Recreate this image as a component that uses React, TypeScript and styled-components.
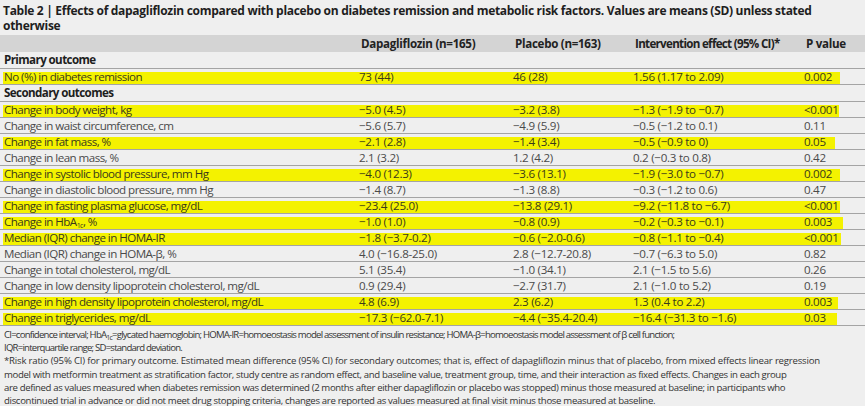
import React from "react";
import styled, { createGlobalStyle } from "styled-components";

const GlobalStyle = createGlobalStyle`
  html, body {
    margin: 0;
    padding: 0;
    background: #efefef;
  }
  body {
    font-family: "Open Sans", "DejaVu Sans", sans-serif;
    color: #3f3f3f;
  }
  sub {
    font-size: 7px;
    line-height: 0;
    vertical-align: baseline;
    position: relative;
    top: 2px;
  }
`;

type DataRow = {
  label: React.ReactNode;
  dapa: string;
  placebo: string;
  effect: string;
  p: string;
  mark?: number;
};

type Section = { title: string; rows: DataRow[] };

const sections: Section[] = [
  {
    title: "Primary outcome",
    rows: [
      {
        label: "No (%) in diabetes remission",
        dapa: "73 (44)",
        placebo: "46 (28)",
        effect: "1.56 (1.17 to 2.09)",
        p: "0.002",
        mark: 840,
      },
    ],
  },
  {
    title: "Secondary outcomes",
    rows: [
      { label: "Change in body weight, kg", dapa: "−5.0 (4.5)", placebo: "−3.2 (3.8)", effect: "−1.3 (−1.9 to −0.7)", p: "<0.001", mark: 839 },
      { label: "Change in waist circumference, cm", dapa: "−5.6 (5.7)", placebo: "−4.9 (5.9)", effect: "−0.5 (−1.2 to 0.1)", p: "0.11" },
      { label: "Change in fat mass, %", dapa: "−2.1 (2.8)", placebo: "−1.4 (3.4)", effect: "−0.5 (−0.9 to 0)", p: "0.05", mark: 835 },
      { label: "Change in lean mass, %", dapa: "2.1 (3.2)", placebo: "1.2 (4.2)", effect: "0.2 (−0.3 to 0.8)", p: "0.42" },
      { label: "Change in systolic blood pressure, mm Hg", dapa: "−4.0 (12.3)", placebo: "−3.6 (13.1)", effect: "−1.9 (−3.0 to −0.7)", p: "0.002", mark: 840 },
      { label: "Change in diastolic blood pressure, mm Hg", dapa: "−1.4 (8.7)", placebo: "−1.3 (8.8)", effect: "−0.3 (−1.2 to 0.6)", p: "0.47" },
      { label: "Change in fasting plasma glucose, mg/dL", dapa: "−23.4 (25.0)", placebo: "−13.8 (29.1)", effect: "−9.2 (−11.8 to −6.7)", p: "<0.001", mark: 840 },
      {
        label: (
          <>
            Change in HbA<sub>1c</sub>, %
          </>
        ),
        dapa: "−1.0 (1.0)",
        placebo: "−0.8 (0.9)",
        effect: "−0.2 (−0.3 to −0.1)",
        p: "0.003",
        mark: 843,
      },
      { label: "Median (IQR) change in HOMA-IR", dapa: "−1.8 (−3.7-0.2)", placebo: "−0.6 (−2.0-0.6)", effect: "−0.8 (−1.1 to −0.4)", p: "<0.001", mark: 841 },
      { label: "Median (IQR) change in HOMA-β, %", dapa: "4.0 (−16.8-25.0)", placebo: "2.8 (−12.7-20.8)", effect: "−0.7 (−6.3 to 5.0)", p: "0.82" },
      { label: "Change in total cholesterol, mg/dL", dapa: "5.1 (35.4)", placebo: "−1.0 (34.1)", effect: "2.1 (−1.5 to 5.6)", p: "0.26" },
      { label: "Change in low density lipoprotein cholesterol, mg/dL", dapa: "0.9 (29.4)", placebo: "−2.7 (31.7)", effect: "2.1 (−1.0 to 5.2)", p: "0.19" },
      { label: "Change in high density lipoprotein cholesterol, mg/dL", dapa: "4.8 (6.9)", placebo: "2.3 (6.2)", effect: "1.3 (0.4 to 2.2)", p: "0.003", mark: 838 },
      { label: "Change in triglycerides, mg/dL", dapa: "−17.3 (−62.0-7.1)", placebo: "−4.4 (−35.4-20.4)", effect: "−16.4 (−31.3 to −1.6)", p: "0.03", mark: 837 },
    ],
  },
];

// each printed line of the footnote, with how tight it is set
const footnotes: { text: React.ReactNode; track: number }[] = [
  {
    text: (
      <>
        CI=confidence interval; HbA<sub>1c</sub>=glycated haemoglobin; HOMA-IR=homoeostasis model assessment of insulin resistance; HOMA-β=homoeostasis model assessment of β cell function;
      </>
    ),
    track: -0.78,
  },
  { text: "IQR=interquartile range; SD=standard deviation.", track: -0.78 },
  {
    text: "*Risk ratio (95% CI) for primary outcome. Estimated mean difference (95% CI) for secondary outcomes; that is, effect of dapagliflozin minus that of placebo, from mixed effects linear regression",
    track: -0.2,
  },
  {
    text: "model with metformin treatment as stratification factor, study centre as random effect, and baseline value, treatment group, time, and their interaction as fixed effects. Changes in each group",
    track: -0.36,
  },
  {
    text: "are defined as values measured when diabetes remission was determined (2 months after either dapagliflozin or placebo was stopped) minus those measured at baseline; in participants who",
    track: -0.37,
  },
  {
    text: "discontinued trial in advance or did not meet drug stopping criteria, changes are reported as values measured at final visit minus those measured at baseline.",
    track: -0.33,
  },
];

const App: React.FC = () => {
  return (
    <>
      <GlobalStyle />
      <StyledPage>
        <StyledTitle>
          Table 2 | Effects of dapagliflozin compared with placebo on diabetes remission and metabolic risk factors. Values are means (SD) unless stated otherwise
        </StyledTitle>
        <StyledHeaderRow>
          <span />
          <StyledHeadCell>Dapagliflozin (n=165)</StyledHeadCell>
          <StyledHeadCell>Placebo (n=163)</StyledHeadCell>
          <StyledHeadCell $tight>Intervention effect (95% CI)*</StyledHeadCell>
          <StyledHeadCell>P value</StyledHeadCell>
        </StyledHeaderRow>
        {sections.map((section) => (
          <React.Fragment key={section.title}>
            <StyledSectionRow>{section.title}</StyledSectionRow>
            {section.rows.map((row, i) => (
              <StyledRow key={i} $mark={row.mark}>
                <StyledLabel>{row.label}</StyledLabel>
                <span>{row.dapa}</span>
                <span>{row.placebo}</span>
                <span>{row.effect}</span>
                <span>{row.p}</span>
              </StyledRow>
            ))}
          </React.Fragment>
        ))}
        <StyledFootnotes>
          {footnotes.map((line, i) => (
            <StyledFootLine key={i} $track={line.track}>
              {line.text}
            </StyledFootLine>
          ))}
        </StyledFootnotes>
      </StyledPage>
    </>
  );
};

const COLUMNS = "355px 154px 120px 171px 1fr";

const StyledPage = styled.div`
  width: 865px;
  height: 406px;
  overflow: hidden;
`;

const StyledTitle = styled.div`
  height: 35px;
  box-sizing: border-box;
  padding: 3px 20px 0 3px;
  font-size: 12px;
  font-weight: 700;
  letter-spacing: -0.3px;
  line-height: 15px;
  color: #1e1e1e;
`;

const StyledHeaderRow = styled.div`
  display: grid;
  grid-template-columns: ${COLUMNS};
  align-items: center;
  height: 17px;
  padding-left: 4px;
  background: #d4d4d4;
  font-size: 11.6px;
  font-weight: 700;
  letter-spacing: -0.3px;
  color: #222;
`;

const StyledHeadCell = styled.span<{ $tight?: boolean }>`
  padding-left: 2px;
  white-space: nowrap;
  letter-spacing: ${(p) => (p.$tight ? "-0.7px" : "inherit")};
`;

const StyledSectionRow = styled.div`
  height: 17px;
  box-sizing: border-box;
  padding-left: 4px;
  border-bottom: 1px solid #a4a4a4;
  font-size: 11.6px;
  font-weight: 700;
  letter-spacing: -0.6px;
  line-height: 16px;
  color: #1e1e1e;
`;

const StyledRow = styled.div<{ $mark?: number }>`
  display: grid;
  grid-template-columns: ${COLUMNS};
  height: 16px;
  box-sizing: border-box;
  padding-left: 4px;
  border-bottom: 1px solid #a4a4a4;
  font-size: 11.6px;
  letter-spacing: -0.28px;
  line-height: 15px;
  white-space: nowrap;
  color: ${(p) => (p.$mark ? "#3a3a1a" : "#4a4a4a")};
  background: ${(p) =>
    p.$mark
      ? `linear-gradient(#f4f200, #f4f200) no-repeat 3px 3px / ${p.$mark - 3}px 12px`
      : "none"};
`;

const StyledLabel = styled.span`
  letter-spacing: -0.55px;
`;

const StyledFootnotes = styled.div`
  padding: 2px 0 0 4px;
  font-size: 9.6px;
  line-height: 13.2px;
  color: #333;
`;

const StyledFootLine = styled.div<{ $track: number }>`
  white-space: nowrap;
  letter-spacing: ${(p) => p.$track}px;
`;

export default App;
